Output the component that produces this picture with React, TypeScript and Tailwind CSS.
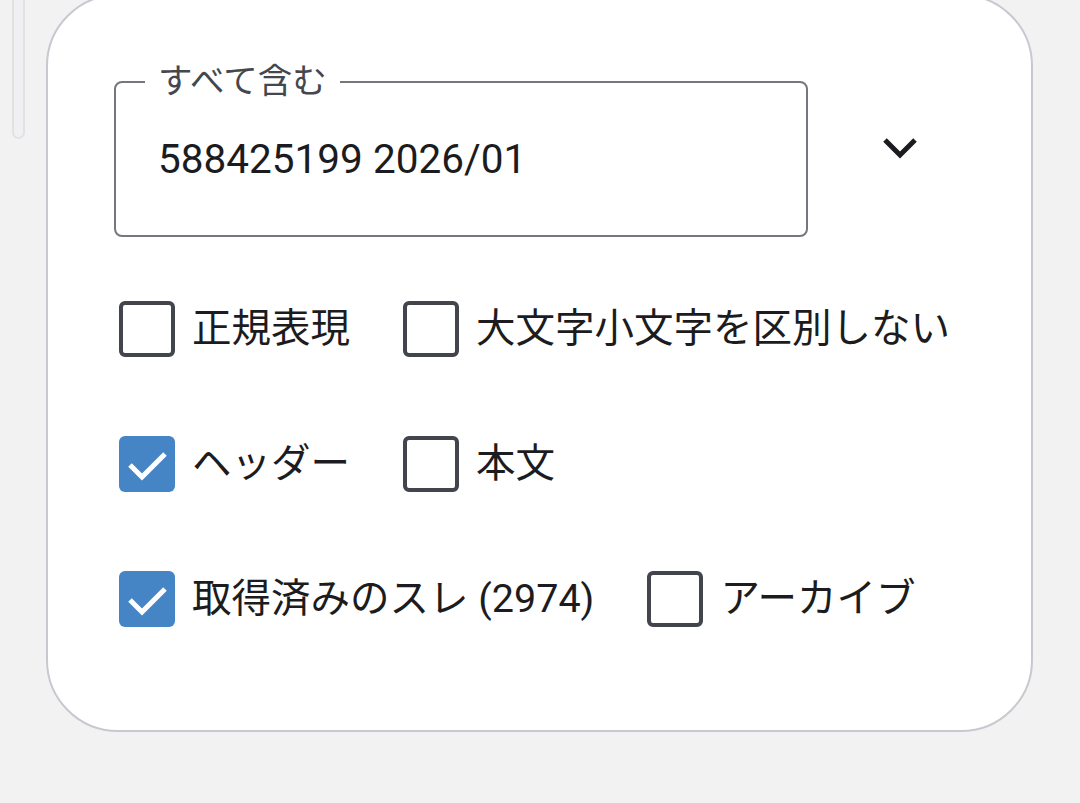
import React from 'react';

interface Option {
  label: string;
  checked: boolean;
}

const rows: Option[][] = [
  [
    { label: '正規表現', checked: false },
    { label: '大文字小文字を区別しない', checked: false },
  ],
  [
    { label: 'ヘッダー', checked: true },
    { label: '本文', checked: false },
  ],
  [
    { label: '取得済みのスレ (2974)', checked: true },
    { label: 'アーカイブ', checked: false },
  ],
];

const CheckBox: React.FC<{ checked: boolean }> = ({ checked }) =>
  checked ? (
    <span className="flex h-[56px] w-[56px] shrink-0 items-center justify-center rounded-[6px] bg-[#4585c6]">
      <svg width="56" height="56" viewBox="0 0 56 56" fill="none">
        <path d="M11 29 L23 41 L46 18" stroke="#ffffff" strokeWidth="5" />
      </svg>
    </span>
  ) : (
    <span className="block h-[56px] w-[56px] shrink-0 rounded-[6px] border-[4px] border-[#42454c] bg-white" />
  );

const App: React.FC = () => {
  return (
    <div
      className="flex h-[803px] w-[1080px] overflow-hidden bg-[#f2f2f3]"
      style={{ fontFamily: "Roboto, 'Noto Sans CJK JP', sans-serif" }}
    >
      {/* left scroll handle */}
      <div className="ml-[12px] h-[139px] w-[13px] shrink-0 rounded-b-full border-[2px] border-t-0 border-[#e2e2e5] bg-[#f0f0f2]" />

      {/* card */}
      <div className="-mt-[6px] ml-[21px] h-[738px] w-[987px] shrink-0 rounded-[72px] border-[2px] border-[#c8c8d0] bg-white pl-[66px] pt-[85px]">
        <div className="flex items-start">
          <div className="relative h-[156px] w-[694px] rounded-[8px] border-[2px] border-[#76777d]">
            <span className="absolute left-[29px] top-[-23px] bg-white px-[13px] text-[34.5px] leading-[42px] text-[#45474d]">
              すべて含む
            </span>
            <div className="pl-[42px] pt-[52px] text-[40.5px] leading-[48px] text-[#1c1c20]">
              588425199 2026/01
            </div>
          </div>
          <div className="ml-[74px] mt-[55px]">
            <svg width="36" height="24" viewBox="0 0 36 24" fill="none">
              <path d="M3 4 L18 19 L33 4" stroke="#1c1c20" strokeWidth="5" />
            </svg>
          </div>
        </div>

        <div className="ml-[5px] mt-[64px] flex flex-col gap-[79px]">
          {rows.map((row, i) => (
            <div key={i} className="flex items-center gap-x-[53px]">
              {row.map((opt) => (
                <label key={opt.label} className="flex items-center gap-[17px]">
                  <CheckBox checked={opt.checked} />
                  <span className="whitespace-nowrap text-[39.5px] leading-[56px] text-[#1c1c20]">
                    {opt.label}
                  </span>
                </label>
              ))}
            </div>
          ))}
        </div>
      </div>
    </div>
  );
};

export default App;
